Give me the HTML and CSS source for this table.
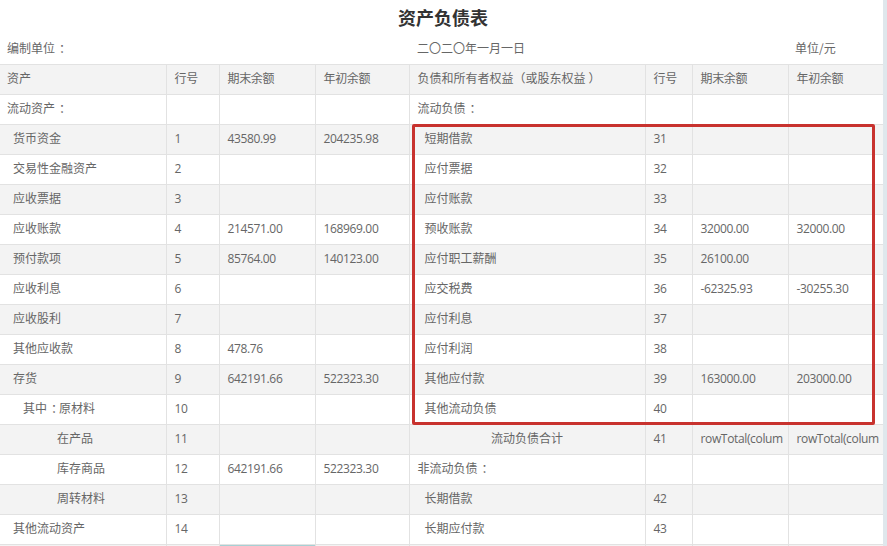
FILE: index.html
```html
<!DOCTYPE html>
<html lang="zh-CN">
<head>
<meta charset="utf-8">
<title>资产负债表</title>
<link rel="stylesheet" href="styles.css">
</head>
<body>
<div class="page">
  <div class="sheet">
    <h1 class="title">资产负债表</h1>
    <div class="info">
      <span class="info-left">编制单位<span class="colon">：</span></span>
      <span class="info-mid">二〇二〇年一月一日</span>
      <span class="info-right">单位/元</span>
    </div>
    <table class="bs">
      <colgroup>
        <col class="c1"><col class="c2"><col class="c3"><col class="c4">
        <col class="c5"><col class="c6"><col class="c7"><col class="c8">
      </colgroup>
      <tr class="head"><td class="first">资产</td><td>行号</td><td>期末余额</td><td>年初余额</td><td>负债和所有者权益（或股东权益<span class="rp">）</span></td><td>行号</td><td>期末余额</td><td>年初余额</td></tr>
      <tr><td class="first">流动资产<span class="colon">：</span></td><td></td><td></td><td></td><td>流动负债<span class="colon">：</span></td><td></td><td></td><td></td></tr>
      <tr><td class="i1">货币资金</td><td>1</td><td>43580.99</td><td>204235.98</td><td class="r1">短期借款</td><td>31</td><td></td><td></td></tr>
      <tr><td class="i1">交易性金融资产</td><td>2</td><td></td><td></td><td class="r1">应付票据</td><td>32</td><td></td><td></td></tr>
      <tr><td class="i1">应收票据</td><td>3</td><td></td><td></td><td class="r1">应付账款</td><td>33</td><td></td><td></td></tr>
      <tr><td class="i1">应收账款</td><td>4</td><td>214571.00</td><td>168969.00</td><td class="r1">预收账款</td><td>34</td><td>32000.00</td><td>32000.00</td></tr>
      <tr><td class="i1">预付款项</td><td>5</td><td>85764.00</td><td>140123.00</td><td class="r1">应付职工薪酬</td><td>35</td><td>26100.00</td><td></td></tr>
      <tr><td class="i1">应收利息</td><td>6</td><td></td><td></td><td class="r1">应交税费</td><td>36</td><td>-62325.93</td><td>-30255.30</td></tr>
      <tr><td class="i1">应收股利</td><td>7</td><td></td><td></td><td class="r1">应付利息</td><td>37</td><td></td><td></td></tr>
      <tr><td class="i1">其他应收款</td><td>8</td><td>478.76</td><td></td><td class="r1">应付利润</td><td>38</td><td></td><td></td></tr>
      <tr><td class="i1">存货</td><td>9</td><td>642191.66</td><td>522323.30</td><td class="r1">其他应付款</td><td>39</td><td>163000.00</td><td>203000.00</td></tr>
      <tr><td class="i2">其中<span class="colon">：</span>原材料</td><td>10</td><td></td><td></td><td class="r1">其他流动负债</td><td>40</td><td></td><td></td></tr>
      <tr><td class="i3">在产品</td><td>11</td><td></td><td></td><td class="center">流动负债合计</td><td>41</td><td>rowTotal(colum</td><td>rowTotal(colum</td></tr>
      <tr><td class="i3">库存商品</td><td>12</td><td>642191.66</td><td>522323.30</td><td>非流动负债<span class="colon">：</span></td><td></td><td></td><td></td></tr>
      <tr><td class="i3">周转材料</td><td>13</td><td></td><td></td><td class="r1">长期借款</td><td>42</td><td></td><td></td></tr>
      <tr><td class="i1">其他流动资产</td><td>14</td><td></td><td></td><td class="r1">长期应付款</td><td>43</td><td></td><td></td></tr>
      <tr><td class="first"></td><td></td><td class="sel"></td><td></td><td class="r1"></td><td></td><td></td><td></td></tr>
    </table>
    <div class="highlight"></div>
  </div>
  <div class="strip"></div>
</div>
</body>
</html>
```

FILE: styles.css
```css
html, body {
  margin: 0;
  padding: 0;
  overflow: hidden;
  background: #ffffff;
}

body {
  font-family: "Open Sans", "Noto Sans CJK SC", sans-serif;
  font-size: 12px;
  color: #666666;
}

.colon {
  font-family: "Noto Sans CJK SC", sans-serif;
  padding-left: 4px;
  letter-spacing: -4px;
}

.rp {
  font-family: "Noto Sans CJK SC", sans-serif;
  padding-left: 3px;
  letter-spacing: -3px;
}

.page {
  display: flex;
  width: 887px;
}

.sheet {
  position: relative;
  width: 883px;
  flex: none;
}

.strip {
  width: 4px;
  flex: none;
  background: #dfe7ec;
  min-height: 546px;
}

.title {
  margin: 0;
  height: 34px;
  line-height: 34px;
  text-align: center;
  font-family: "Noto Sans CJK SC", sans-serif;
  font-size: 18px;
  font-weight: bold;
  color: #333333;
  padding-left: 3px;
}

.info {
  display: grid;
  grid-template-columns: 409px 379px 1fr;
  height: 30px;
  line-height: 28px;
  font-family: "Noto Sans CJK SC", sans-serif;
}

.info-left { padding-left: 7px; }
.info-mid { padding-left: 8px; }
.info-right { padding-left: 7px; }

.bs {
  width: 883px;
  table-layout: fixed;
  border-collapse: collapse;
}

.c1 { width: 166px; }
.c2 { width: 53px; }
.c3 { width: 96px; }
.c4 { width: 94px; }
.c5 { width: 236px; }
.c6 { width: 47px; }
.c7 { width: 96px; }
.c8 { width: 95px; }

.bs td {
  height: 27px;
  padding: 0 0 2px 8px;
  border: 1px solid #e2e2e2;
  white-space: nowrap;
  overflow: hidden;
  vertical-align: middle;
  line-height: 26px;
}

.bs td:nth-child(2),
.bs td:nth-child(3),
.bs td:nth-child(4),
.bs td:nth-child(6),
.bs td:nth-child(7),
.bs td:nth-child(8) {
  letter-spacing: -0.35px;
}

.bs td:first-child { border-left: none; }
.bs td:last-child { border-right: none; }

.bs tr:nth-child(odd) td { background: #f3f3f3; }
.bs tr:nth-child(even) td { background: #ffffff; }

.bs td.first { padding-left: 7px; }
.bs td.i1 { padding-left: 13px; }
.bs td.i2 { padding-left: 23px; }
.bs td.i3 { padding-left: 57px; }
.bs td.r1 { padding-left: 15px; }
.bs td.center { text-align: center; padding-left: 0; }

.bs td.sel { box-shadow: inset 0 0 0 2px #a6d0d4; }

.highlight {
  position: absolute;
  left: 412px;
  top: 124px;
  width: 457px;
  height: 295px;
  border: 3px solid #c8322e;
  border-radius: 2px;
  pointer-events: none;
}
```
